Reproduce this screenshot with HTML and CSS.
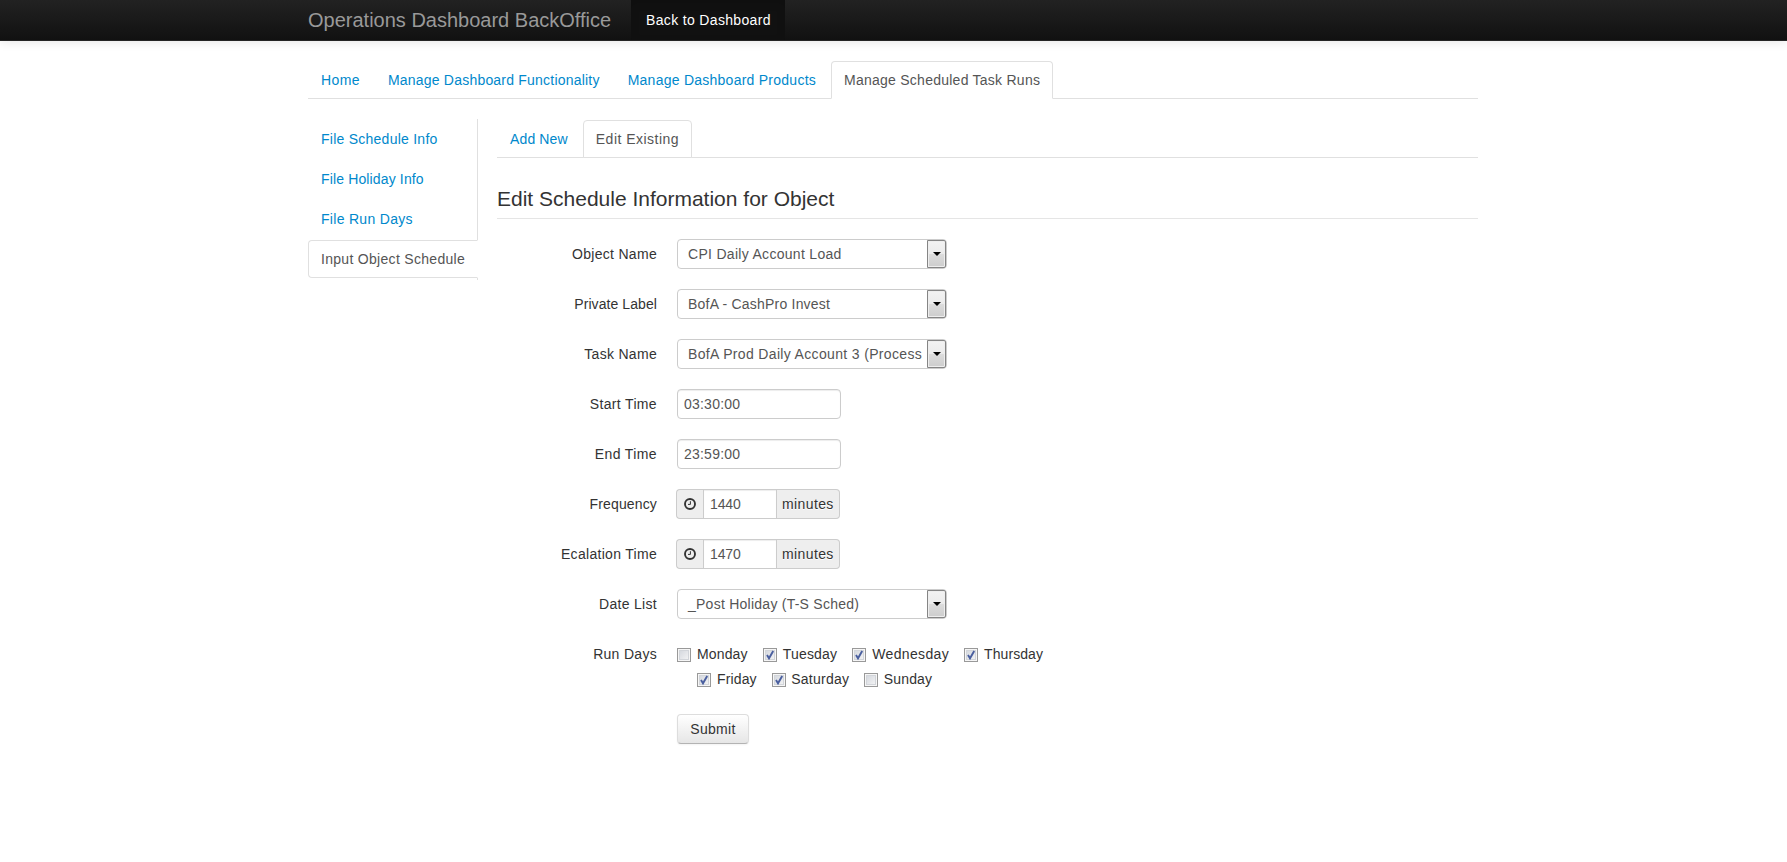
FILE: index.html
```html
<!DOCTYPE html>
<html lang="en">
<head>
<meta charset="utf-8">
<title>Operations Dashboard BackOffice</title>
<link rel="stylesheet" href="styles.css">
</head>
<body>
<svg class="defs" width="0" height="0" aria-hidden="true">
  <symbol id="clock" viewBox="0 0 12 12">
    <circle cx="6" cy="6" r="5" fill="none" stroke="#333" stroke-width="1.9"/>
    <path d="M6.4 3.2v3.2H4" fill="none" stroke="#333" stroke-width="1"/>
  </symbol>
  <symbol id="check" viewBox="0 0 14 14">
    <path d="M4 7l2 3.3L10.2 3" fill="none" stroke="#4a5f9f" stroke-width="1.9"/>
  </symbol>
</svg>
<header class="navbar">
  <div class="container navbar-inner">
    <a class="brand">Operations Dashboard BackOffice</a>
    <a class="nav-link s35">Back to Dashboard</a>
  </div>
</header>
<main class="container">
  <nav class="tabs tabs-main">
    <a class="tab s40">Home</a>
    <a class="tab s20">Manage Dashboard Functionality</a>
    <a class="tab s25">Manage Dashboard Products</a>
    <a class="tab active s25">Manage Scheduled Task Runs</a>
  </nav>
  <div class="columns">
    <nav class="side">
      <a class="side-item s25">File Schedule Info</a>
      <a class="side-item s15">File Holiday Info</a>
      <a class="side-item s30">File Run Days</a>
      <a class="side-item active s30">Input Object Schedule</a>
    </nav>
    <section class="content">
      <nav class="tabs">
        <a class="tab s15">Add New</a>
        <a class="tab active s50">Edit Existing</a>
      </nav>
      <h2 class="legend">Edit Schedule Information for Object</h2>
      <form class="form">
        <div class="row"><label class="label s30">Object Name</label>
          <div class="select"><span class="value s30">CPI Daily Account Load</span><i class="arrow"></i></div></div>
        <div class="row"><label class="label s10">Private Label</label>
          <div class="select"><span class="value s20">BofA - CashPro Invest</span><i class="arrow"></i></div></div>
        <div class="row"><label class="label s30">Task Name</label>
          <div class="select"><span class="value s35">BofA Prod Daily Account 3 (Process</span><i class="arrow"></i></div></div>
        <div class="row"><label class="label s35">Start Time</label>
          <input class="input" type="text" value="03:30:00"></div>
        <div class="row"><label class="label s40">End Time</label>
          <input class="input" type="text" value="23:59:00"></div>
        <div class="row"><label class="label s15">Frequency</label>
          <div class="group"><span class="addon"><svg class="clock"><use href="#clock"/></svg></span><input class="group-input" type="text" value="1440"><span class="addon unit s40">minutes</span></div></div>
        <div class="row"><label class="label s30">Ecalation Time</label>
          <div class="group"><span class="addon"><svg class="clock"><use href="#clock"/></svg></span><input class="group-input" type="text" value="1470"><span class="addon unit s40">minutes</span></div></div>
        <div class="row"><label class="label s30">Date List</label>
          <div class="select"><span class="value s25">_Post Holiday (T-S Sched)</span><i class="arrow"></i></div></div>
        <div class="row row-days"><label class="label s30">Run Days</label>
          <div class="days">
            <div class="days-line">
              <label class="day s15"><i class="box"></i>Monday</label>
              <label class="day s20"><i class="box"><svg class="check"><use href="#check"/></svg></i>Tuesday</label>
              <label class="day s35"><i class="box"><svg class="check"><use href="#check"/></svg></i>Wednesday</label>
              <label class="day s10"><i class="box"><svg class="check"><use href="#check"/></svg></i>Thursday</label>
            </div>
            <div class="days-line indent">
              <label class="day s15"><i class="box"><svg class="check"><use href="#check"/></svg></i>Friday</label>
              <label class="day s25"><i class="box"><svg class="check"><use href="#check"/></svg></i>Saturday</label>
              <label class="day s15"><i class="box"></i>Sunday</label>
            </div>
          </div></div>
        <div class="row"><span class="label"></span><button class="submit s30" type="button">Submit</button></div>
      </form>
    </section>
  </div>
</main>
</body>
</html>
```
FILE: styles.css
```css
* { box-sizing: border-box; }
body {
  margin: 0;
  background: #fff;
  color: #333;
  font: 14px/20px "Liberation Sans", Arial, sans-serif;
}
.defs { display: block; }
.container { width: 1171px; margin: 0 auto; padding-right: 1px; }

/* tracking steps */
.s10 { letter-spacing: .08px; }
.s15 { letter-spacing: .14px; }
.s20 { letter-spacing: .21px; }
.s25 { letter-spacing: .25px; }
.s30 { letter-spacing: .3px; }
.s35 { letter-spacing: .34px; }
.s40 { letter-spacing: .39px; }
.s50 { letter-spacing: .48px; }

.navbar {
  height: 41px;
  background: linear-gradient(#222, #111);
  border-bottom: 1px solid #252525;
  box-shadow: 0 1px 10px rgba(0, 0, 0, .1);
}
.navbar-inner { display: flex; height: 40px; }
.brand { width: 323px; padding-top: 10px; font-size: 20px; color: #999; white-space: nowrap; }
.nav-link {
  width: 154px;
  padding: 10px 0 10px 15px;
  background: #111;
  color: #fff;
  box-shadow: inset 0 3px 8px rgba(0, 0, 0, .125);
}

.tabs { display: flex; gap: 2px; height: 38px; border-bottom: 1px solid #e0e0e0; }
.tabs-main { margin: 20px 0 21px; }
.tab {
  height: 38px;
  padding: 8px 12px;
  border: 1px solid transparent;
  border-radius: 4px 4px 0 0;
  color: #08c;
  white-space: nowrap;
}
.tab.active { background: #fff; border-color: #e0e0e0; border-bottom-color: #fff; color: #555; }
.content .tab.active { border-bottom-color: #e0e0e0; }

.columns { display: flex; align-items: flex-start; }
.side { width: 170px; height: 161px; margin: -1px 19px 0 0; padding-top: 1px; border-right: 1px solid #e0e0e0; }
.side-item {
  display: block;
  height: 38px;
  margin: 0 -1px 2px 0;
  padding: 8px 12px;
  border: 1px solid transparent;
  border-radius: 4px 0 0 4px;
  color: #08c;
  white-space: nowrap;
}
.side-item.active { background: #fff; border-color: #e0e0e0; border-right-color: #fff; color: #555; }

.content { flex: 1; }
.legend {
  height: 41px;
  margin: 20px 0;
  border-bottom: 1px solid #e5e5e5;
  font-size: 21px;
  font-weight: normal;
  line-height: 42px;
}
.row { display: flex; height: 30px; margin-bottom: 20px; }
.label { width: 160px; margin-right: 20px; padding-top: 5px; text-align: right; }
.select {
  display: flex;
  width: 270px;
  height: 30px;
  border: 1px solid #ccc;
  border-radius: 4px;
  color: #555;
}
.value { flex: 1; overflow: hidden; margin-right: 5px; padding: 4px 0 4px 10px; white-space: nowrap; }
.arrow {
  display: flex;
  align-items: center;
  justify-content: center;
  width: 19px;
  height: 28px;
  border: 1px solid #858585;
  border-radius: 0 2px 2px 0;
  background: linear-gradient(#f3f3f3, #ebebeb 50%, #dcdcdc 51%, #cdcdcd);
  box-shadow: inset 0 0 0 1px #eee;
}
.arrow::after { content: ""; border: 4px solid transparent; border-top-color: #000; border-bottom: 0; }
.input, .group-input {
  font: inherit;
  color: #555;
  background: #fff;
  border: 1px solid #ccc;
  box-shadow: inset 0 1px 1px rgba(0, 0, 0, .075);
}
.input { width: 164px; height: 30px; padding: 4px 6px; border-radius: 4px; letter-spacing: .22px; }
.group { display: flex; height: 30px; margin-left: -1px; }
.group-input { width: 74px; padding: 4px 6px; letter-spacing: -.1px; }
.addon {
  width: 27px;
  height: 30px;
  padding: 8px 0 0 7px;
  border: 1px solid #ccc;
  border-right: 0;
  border-radius: 4px 0 0 4px;
  background: #eee;
  text-shadow: 0 1px 0 #fff;
}
.unit { width: 63px; padding: 4px 5px; border: 1px solid #ccc; border-left: 0; border-radius: 0 4px 4px 0; }
.clock { display: block; width: 12px; height: 12px; }

.row-days { height: 55px; }
.days { padding-top: 5px; }
.days-line { display: flex; gap: 15px; height: 25px; }
.indent { padding-left: 20px; }
.day { display: flex; white-space: nowrap; }
.indent .day + .day .box { margin-right: 5.5px; }
.box {
  width: 14px;
  height: 14px;
  margin: 4px 6px 0 0;
  border: 1px solid #999;
  background: linear-gradient(135deg, #cfd3da, #f8f8f8);
  box-shadow: inset 0 0 0 1px #f6f6f6, inset 0 0 0 2px #d2d5da;
}
.check { display: block; width: 14px; height: 14px; margin: -1px; }
.submit {
  width: 72px;
  height: 30px;
  padding: 4px 0;
  border: 1px solid #ddd;
  border-bottom-color: #b3b3b3;
  border-radius: 4px;
  background: linear-gradient(#fff, #e6e6e6);
  box-shadow: inset 0 1px 0 rgba(255, 255, 255, .2), 0 1px 2px rgba(0, 0, 0, .05);
  color: #333;
  font: inherit;
}
.submit.s30 { letter-spacing: .3px; }
```
